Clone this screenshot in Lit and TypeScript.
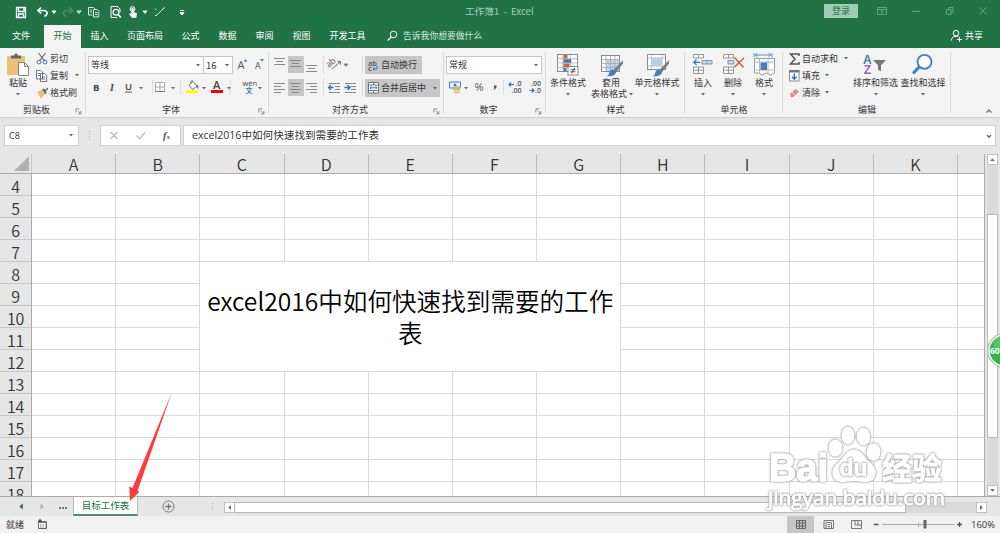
import { LitElement, html, svg, css } from "lit";
import { customElement } from "lit/decorators.js";

const caret = (x: number, y: number, c = "#666") => svg`<path d="M${x - 2} ${y - 1}h4l-2 2.4z" fill=${c} />`;
const launcher = html`<svg class="launch" width="7" height="7" viewBox="0 0 7 7" fill="none" stroke="#777" stroke-width=".8"><path d="M.9 4.5V.9H4.5M2.8 2.8L5.6 5.6M5.9 3V5.9H3" /></svg>`;
const down = html`<svg class="dn" width="8" height="5" viewBox="0 0 8 5">${caret(4, 2)}</svg>`;

const brush = svg`<path d="M24 7.2L14.5 17l2.2 2.4L24 10.500z" fill="#7b7b7b"/><path d="M14 16.500l3 2.800c-.6 3.200-4.800 4.500-9.500 3.600 2-.6 2.400-1.600 2.700-3 .5-2.500 2.100-3.700 3.800-3.400z" fill="#3f7fc1"/>`;

const icons = {
  paste: svg`<rect x="1" y="3" width="18" height="19" rx="1" fill="#ecc272"/><path d="M5 5.500V2.500h3Q8.300 .5 10 .5t2 2h3v3z" fill="#666"/><path d="M12.500 9.500h6l4 4v9h-10z" fill="#fff" stroke="#858585"/><path d="M18.500 9.500v4h4" fill="none" stroke="#858585"/>`,
  cond: svg`<rect x="1.500" y="1.500" width="20" height="17" fill="#fff" stroke="#8a8a8a"/><path d="M7 1.500v17M14.500 1.500v17M1.500 5.700h20M1.500 10h20M1.500 14.300h20" stroke="#a8a8a8" fill="none" stroke-width=".8"/><path d="M7.500 2h4v3.600h-4zM7.500 10.500h6v3.500h-6z" fill="#d9603b"/><path d="M7.500 6.200h7.800v3.600H7.500zM7.500 14.700h3v3.500h-3z" fill="#4178b5"/><rect x="12" y="13.500" width="10" height="8.500" fill="#fff" stroke="#8a8a8a"/><path d="M14.500 16.700h5M14.500 18.800h5M18.800 15l-3.400 5.500" stroke="#444" stroke-width=".9" fill="none"/>`,
  table: svg`<rect x="2.500" y="2.500" width="18" height="16" fill="#fff" stroke="#8a8a8a"/><path d="M7 6.500h13v11.500H7z" fill="#bfd4ea"/><path d="M7 2.500v16M11.500 2.500v16M16 2.500v16M2.500 6.500h18M2.500 10.500h18M2.500 14.500h18" stroke="#a0a7ae" stroke-width=".8" fill="none"/>${brush}`,
  cell: svg`<rect x="2.500" y="1.500" width="18" height="15" fill="#fff" stroke="#8a8a8a"/><path d="M6.500 1.500v15M17 1.500v15M2.500 5h18M2.500 13h18" stroke="#b0b0b0" stroke-width=".8" fill="none"/><rect x="6.500" y="5" width="10.500" height="8" fill="#b6cfe9"/>${brush}`,
  insert: svg`<g fill="#fff" stroke="#8a8a8a" stroke-width=".9"><path d="M2.500 1.500h10v3.500h-10zM2.500 14h10v6.500h-10zM2.500 17.200h10M7.500 1.500v3.500M7.500 14v6.500"/></g><path d="M11 7.500h10v3.500H11zM16 7.500v3.500" fill="#c5daf0" stroke="#7a8fa5" stroke-width=".9"/><path d="M3 9.300h6M5.500 6.700L2.800 9.300l2.700 2.600" stroke="#2e75b6" stroke-width="1.300" fill="none"/>`,
  del: svg`<g fill="#fff" stroke="#8a8a8a" stroke-width=".9"><path d="M2.500 1.500h10v3.500h-10zM2.500 14h10v6.500h-10zM2.500 17.200h10M7.500 1.500v3.500M7.500 14v6.500"/></g><path d="M7 7.500h6v3.500H7z" fill="#c5daf0" stroke="#7a8fa5" stroke-width=".9"/><path d="M13.500 4.500l9 10M23 5l-9.500 9" stroke="#d9603b" stroke-width="1.700" fill="none"/>`,
  format: svg`<path d="M2 0v4M20 0v4M3 2h16M5.500.2L3.300 2l2.200 1.800M16.500.2L18.700 2l-2.200 1.800" stroke="#4a86c0" stroke-width=".9" fill="none"/><path d="M2.500 5.500h20v14.500l-4 2-4-2-4 2-4-2h-4z" fill="#fff" stroke="#9a9a9a"/><path d="M7.500 5.500v15M16 5.500v15M2.500 9h20M2.500 17h20" stroke="#a8a8a8" fill="none" stroke-width=".8"/><rect x="8.500" y="9.500" width="6.500" height="7.500" fill="#3f7fc1"/>`,
  sort: svg`<g font-family="Liberation Sans" font-weight="700" font-size="12"><text x="-1" y="10.500" fill="#3f7fc1">A</text><text x="-.3" y="20.800" fill="#a060c0">Z</text></g><path d="M9 7h13l-5 5.300v6l-3-1.500v-4.500z" fill="#777"/>`,
  find: svg`<circle cx="13.500" cy="8.800" r="7" fill="#fdfdfd" stroke="#3f7fc1" stroke-width="1.800"/><path d="M8.300 13.800L2 20.500" stroke="#3f7fc1" stroke-width="3"/>`,
};

const big = (cls: string, icon: unknown, label: unknown, two = false) => html`<div class="big ${cls}">
  <svg width="24" height="24" viewBox="0 0 24 24">${icon}</svg>
  <div class="bl">${label}</div>${two ? html`<div class="bl l2">表格格式${down}</div>` : down}
</div>`;

@customElement("app-root")
export class AppRoot extends LitElement {
  static styles = css`
    :host { display: block; width: 1000px; height: 533px; position: relative; overflow: hidden; background: #e6e6e6;
      font: 9px/12px "Noto Sans CJK SC", sans-serif; color: #333; }
    * { box-sizing: border-box; }
    svg { display: block; flex: none; overflow: visible; }
    div { white-space: nowrap; }
    .title { height: 25px; display: flex; background: #217346; color: #a6c9b5; }
    .name { width: 360px; padding: 5px 0 0 265px; font-size: 9.600px; }
    .gap { flex: 1; }
    .login { width: 34px; height: 14px; margin-top: 4px; background: #9fcdb3; color: #217346; text-align: center; line-height: 14px; }
    .tabs { height: 23px; display: flex; background: #217346; color: #fff; line-height: 22px; text-align: center; }
    .tab { width: 37px; }
    .t0 { width: 44px; padding-right: 2px; } .t1 { width: 37px; background: #f3f3f3; color: #217346; }
    .t4 { width: 54px; } .t9 { width: 55px; }
    .tell { width: 110px; display: flex; padding-left: 12px; gap: 5px; font-size: 8.800px; color: #d8e8df; }
    .share { width: 50px; display: flex; gap: 3px; }
    .ribbon { height: 70px; display: flex; background: #f3f3f3; border-bottom: 1px solid #d0d0d0; }
    .grp { height: 69px; position: relative; display: flex; flex-direction: column; }
    .grp::after { content: ""; position: absolute; right: 0; top: 4px; bottom: 4px; width: 1px; background: #d8d8d8; }
    .body { height: 55px; display: flex; }
    .glabel { text-align: center; line-height: 13px; padding-right: 13px; }
    .launch { position: absolute; right: 4px; bottom: 2px; }
    .gclip { width: 86px; } .gfont { width: 183px; } .galign { width: 175px; } .gnum { width: 102px; }
    .gstyle { width: 139px; } .gcell { width: 98px; } .gedit { width: 168px; }
    .gstyle .glabel, .gcell .glabel, .gedit .glabel { padding: 0; }
    .big { display: flex; flex-direction: column; align-items: center; padding-top: 5px; }
    .bl { line-height: 12px; display: flex; align-items: center; }
    .dn { margin-top: 3px; }
    .l2 { margin-top: -1px; } .l2 .dn { margin: 0 -4px 0 0; }
    .bpaste { width: 36px; }
    .b44 { width: 44px; } .b42 { width: 42px; } .b50 { width: 50px; }
    .b36 { width: 36px; } .b24 { width: 24px; } .b38 { width: 38px; } .b47 { width: 45px; } .b48 { width: 50px; }
    .rows { padding-top: 2px; }
    .row { height: 17px; display: flex; align-items: center; gap: 2px; line-height: 17px; }
    .rows.e { width: 70px; padding-left: 6px; }
    .row .dn { margin: 0 0 0 1px; }
    .col { display: flex; flex-direction: column; }
    .line { display: flex; height: 29px; padding: 8px 0 0 2px; }
    .combo { height: 18px; background: #fff; border: 1px solid #c6c6c6; display: flex; justify-content: space-between; align-items: center; padding: 0 1px 0 2px; }
    .combo .dn { margin: 0; }
    .cf { width: 116px; } .cs { width: 30px; margin-left: -1px; font-size: 9.500px; } .cn { width: 96px; }
    .tog { height: 18px; background: #c6c6c6; display: flex; align-items: center; gap: 3px; padding-left: 3px; margin-bottom: 5px; }
    .tog .dn { margin: 0 0 0 3px; }
    .w1 { width: 57px; } .w2 { width: 75px; gap: 2px; }
    .btns { padding-top: 8px; }
    .fbar { height: 36px; display: flex; padding: 7px 4px 0; }
    .box { height: 21px; background: #fff; border: 1px solid #cfcfcf; line-height: 19px; display: flex; align-items: center; justify-content: space-between; }
    .nb { width: 75px; padding: 0 3px 0 4px; font-family: "Open Sans"; font-size: 9px; }
    .nb .dn, .fx .dn { margin: 0; }
    .bx { width: 81px; margin-right: 2px; }
    .fx { width: 813px; padding: 0 2px 0 8px; font-family: "Open Sans", "Noto Sans CJK SC", sans-serif; font-size: 10.600px; }
    .fx .ft { margin-top: -1px; }
    .main { height: 342px; display: flex; }
    .sheet { width: 985px; height: 342px; overflow: hidden; border-right: 1px solid #ababab; display: flex; flex-direction: column; }
    .heads { height: 20px; flex: none; display: flex; font-size: 16px; font-weight: 350; line-height: 21px; text-align: center; border-bottom: 1px solid #ababab; }
    .corner { width: 32px; flex: none; border-right: 1px solid #c6c6c6; }
    .h { width: 84.180px; flex: none; border-right: 1px solid #bdbdbd; }
    .lower { display: flex; }
    .nums { width: 32px; flex: none; border-right: 1px solid #ababab; font-size: 16px; font-weight: 350; line-height: 24px; text-align: center; }
    .n { height: 22px; border-bottom: 1px solid #c6c6c6; letter-spacing: -.4px; }
    .cells { flex: none; display: grid; grid-template-columns: repeat(12, 84.180px); grid-auto-rows: 22px; background: #fff; }
    .c { border-right: 1px solid #d9d9d9; border-bottom: 1px solid #d9d9d9; }
    .merged { grid-column: 3 / 8; grid-row: 5 / 10; display: flex; align-items: center; justify-content: center; text-align: center;
      white-space: pre; font-size: 24.600px; line-height: 32px; font-weight: 350; color: #000; padding-bottom: 1px; }
    .vs { width: 15px; display: flex; flex-direction: column; padding: 0 2px; }
    .sb { width: 11px; height: 11px; background: #fff; border: 1px solid #c0c0c0; flex: none; }
    .tr { background: #dadada; } .v1 { height: 49px; } .v2 { height: 48px; flex: 1; }
    .th { background: #fff; border: 1px solid #b8b8b8; } .vt { height: 224px; }
    .bottom { height: 20px; display: flex; border-top: 1px solid #ababab; }
    .stab { width: 65px; height: 19px; background: #fff; border-bottom: 2px solid #4a9069; border-right: 1px solid #bbb; border-left: 1px solid #bbb;
      color: #217346; font-size: 9.500px; line-height: 17px; text-align: center; }
    .hs { display: flex; padding-top: 5px; }
    .ht { width: 672px; height: 11px; margin-left: -1px; } .h2 { width: 70px; height: 11px; }
    .status { height: 17px; display: flex; background: #f1f1f1; padding-left: 6px; line-height: 17px; }
    .pct { font: 9.500px/17px "Open Sans"; width: 29px; }
    .ov { position: absolute; left: 0; top: 0; pointer-events: none; }
    .mark { filter: drop-shadow(0 0 .8px #999) drop-shadow(0 0 .5px #bbb); }
  `;

  render() {
    const cells: unknown[] = [];
    for (let r = 0; r < 15; r++)
      for (let c = 0; c < 12; c++) {
        if (r === 4 && c === 2) cells.push(html`<div class="c merged">excel2016中如何快速找到需要的工作
表</div>`);
        else if (!(r >= 4 && r <= 8 && c >= 2 && c <= 6)) cells.push(html`<div class="c"></div>`);
      }
    return html`
      <div class="title">
        <svg width="200" height="25" fill="none" stroke="#fff" stroke-width="1">
          <path d="M16.500 7.500h9v10h-9z M18.500 7.500v4h5.500v-4 M18.500 17.500v-3.500h5v3.500" stroke-width="1.300"/>
          <path d="M41 7.500L38 10.500l3.200 3M38.500 10.500h5.500q3.500.5 3 3-.4 2-2.500 2.800" stroke-width="1.700"/>${caret(54, 12, "#fff")}
          <g stroke="#4d9069"><path d="M69.500 7.500l3 3-3 3M72 10.500h-5.500q-3.500.5-3 3 .4 2 2.500 2.800" stroke-width="1.500"/></g>${caret(79, 12, "#4d9069")}
          <path d="M92.500 15h-4V7.500h5l1.500 1.500M93.500 9.500h3.500l1.800 1.800V17h-5.300zM90 10h2M90 12h2M95 12.500h2.500M95 14.500h2.500" stroke="#dceae2"/>
          <path d="M117 17.500h-6v-11h6.500l2.500 2.500v3"/><circle cx="116" cy="12.300" r="2.900" stroke-width="1.300"/><path d="M118.200 14.500l2.600 3" stroke-width="1.800"/>
          <circle cx="132.500" cy="9" r="2.400"/><path d="M131.700 8.500q.9-.8 1.700 0v4l3.200.8-.5 4.200h-4.200l-2.500-3.500q.7-1 2.300.2z" fill="#fff" stroke-width=".6"/>${caret(145, 12, "#fff")}
          <path d="M156 16l7.500-7.500M155 8.500l1.500 1.500M162.500 9l2.500-1.500M155 15.500h2" stroke="#dceae2"/>
          <path d="M180 10.500h4"/>${caret(182, 13.500, "#fff")}
        </svg>
        <div class="name">工作簿1&nbsp; - &nbsp;Excel</div><div class="gap"></div><div class="login">登录</div>
        <svg width="142" height="25" fill="none" stroke="#669f7e">
          <path d="M19.500 7.500h9v7h-9zM19.500 9.500h9M24 14v-3.500M22.500 12l1.500-1.500 1.500 1.500M54 11.500h7.500M88.500 9.500h4.500v5h-4.500zM90.500 9.500v-2h4.500v5h-2M121.500 7.500l7 7M128.500 7.500l-7 7"/>
        </svg>
      </div>
      <div class="tabs">
        <div class="tab t0">文件</div><div class="tab t1">开始</div><div class="tab">插入</div><div class="tab t4">页面布局</div>
        <div class="tab">公式</div><div class="tab">数据</div><div class="tab">审阅</div><div class="tab">视图</div><div class="tab t9">开发工具</div>
        <div class="tell"><svg width="11" height="22" fill="none" stroke="#fff"><circle cx="6.500" cy="9.500" r="3.300"/><path d="M4.200 12L.8 15.500" stroke-width="1.300"/></svg>告诉我你想要做什么</div>
        <div class="gap"></div>
        <div class="share"><svg width="12" height="22" fill="none" stroke="#fff"><circle cx="6" cy="8.200" r="2.800"/><path d="M1.500 15.500q0-4 4.500-4.300 1.500 0 2.500.8M9.500 12v5M7 14.500h5"/></svg>共享</div>
      </div>
      <div class="ribbon">
        <div class="grp gclip"><div class="body">
          ${big("bpaste", icons.paste, "粘贴")}
          <div class="rows">
            <div class="row"><svg width="12" height="12" fill="none"><path d="M2.500 0l6 8M9.500 0l-6 8" stroke="#666" stroke-width="1.200"/><circle cx="3" cy="9" r="2" stroke="#3f7fc1"/><circle cx="9" cy="9" r="2" stroke="#3f7fc1"/></svg>剪切</div>
            <div class="row"><svg width="12" height="12" fill="#fff" stroke="#777"><path d="M.5.5h4L6.500 2v7H.5zM4.500 3.500h4.200l2 2v6H4.500z"/><path d="M2 3.500h2M2 5.500h2M6 7h3M6 9h3" stroke="#3f7fc1"/></svg>复制<svg class="dn" width="12" height="5">${caret(6, 2)}</svg></div>
            <div class="row"><svg width="12" height="12"><path d="M1 5l5-2 3 4-4 4.500z" fill="#ecbb76"/><path d="M6 2.500l2-1 1.200 1.200L11.500.5l.8 1.200-2.300 2.500.5 2-1.200 1z" fill="#666"/></svg>格式刷</div>
          </div></div><div class="glabel">剪贴板</div>${launcher}</div>
        <div class="grp gfont"><div class="body col">
          <div class="line"><div class="combo cf">等线${down}</div><div class="combo cs">16${down}</div>
            <svg width="34" height="18" font-family="Open Sans" fill="#555"><text x="4.500" y="12.800" font-size="11">A</text><text x="22" y="12.800" font-size="9">A</text><path d="M10.500 5.500l2-2.500 2 2.500zM27 3h4l-2 2.500z" fill="#3f7fc1"/></svg></div>
          <svg width="182" height="26" font-family="Open Sans" fill="#444" font-size="9.500">
            <text x="7" y="13.500" font-weight="700">B</text><text x="24" y="13.500" font-family="Liberation Serif" font-style="italic" font-weight="700" font-size="10">I</text><text x="39" y="13" font-weight="600">U</text><path d="M39 15h7" stroke="#555"/>${caret(55, 11)}
            <path d="M66.500 3v15M144 3v15" stroke="#dcdcdc"/><path d="M69.500 5.500h9v9h-9zM74 5.500v9M69.500 10h9" fill="#fff" stroke="#aaa"/><path d="M69 14.500h10" stroke="#777"/>${caret(87, 11)}
            <path d="M94.500 3v15" stroke="#dcdcdc"/><path d="M103 8l4-3.500 4 4.500-4.500 3.500z" fill="#fff" stroke="#777"/><path d="M105 7V4h2" stroke="#777" fill="none"/><path d="M111 7.500q2.500 2 .8 4.500l-1.500-2z" fill="#3f7fc1"/><path d="M100 13h12v3h-12z" fill="#ff0"/>${caret(118, 11)}
            <text x="127" y="12.300" font-size="11" font-weight="600">A</text><path d="M125 13h12v3h-12z" fill="red"/>${caret(143, 11)}
            <text x="156.500" y="9" font-size="7.500">wén</text><text x="159.500" y="16" font-size="7" fill="#2e75b6" font-family="Noto Sans CJK SC" font-weight="700">文</text>${caret(174, 11)}
          </svg></div><div class="glabel">字体</div>${launcher}</div>
        <div class="grp galign"><div class="body">
          <svg width="96" height="55" fill="none" stroke="#888">
            <path d="M19 8h16v17H19zM19 31h16v17H19z" fill="#c6c6c6" stroke="none"/>
            <path d="M5 11h11M7 14h7M5 17h11M21 13h11M23 16h7M21 19h11M37 18h11M39 21h7M37 24h11M5 36h11M5 39h7M5 42h11M5 45h7M21 36h11M23 39h7M21 42h11M23 45h7M37 36h11M41 39h7M37 42h11M41 45h7" transform="translate(0 -.5)"/>
            <path d="M54.500 8v17M54.500 31v17M93.500 8v17M93.500 31v17" stroke="#dcdcdc"/>
            <text x="59" y="18" font-size="8.500" font-family="Open Sans" fill="#555" stroke="none" transform="rotate(-38 62 18)">ab</text><path d="M63 21l8-7M68.500 13.500l3 .2-.2 3" stroke="#666"/>${caret(77, 17)}
            <path d="M60 35.500h11M66 38.500h5M66 41.500h5M60 44.500h11M76 35.500h11M82 38.500h5M82 41.500h5M76 44.500h11"/><path d="M59.500 39.500h5M62 37l-2.500 2.500 2.500 2.500M75.500 39.500h5M78.500 37l2.500 2.500-2.500 2.500" stroke="#2e75b6" stroke-width="1.300"/>
          </svg>
          <div class="btns"><div class="tog w1"><svg width="10" height="13" font-family="Open Sans" font-size="7.500" fill="#555"><text x="0" y="6.500" font-weight="600">ab</text><text x="0" y="12" font-weight="600">c</text><path d="M9 7v3H5M6.500 8.500L5 10l1.500 1.500" fill="none" stroke="#2e75b6"/></svg>自动换行</div>
            <div class="tog w2"><svg width="11" height="12" fill="#fff" stroke="#777"><path d="M.5.5h10v10.500H.5zM.5 3h10M.5 8.500h10M5.500.5V3M5.500 8.500V11"/><path d="M2 5.800h7M3.500 4.500L2 5.800l1.500 1.300M7.500 4.500L9 5.800 7.500 7.100" stroke="#2e75b6" fill="none"/></svg>合并后居中${down}</div></div>
          </div><div class="glabel">对齐方式</div>${launcher}</div>
        <div class="grp gnum"><div class="body col"><div class="line"><div class="combo cn">常规${down}</div></div>
          <svg width="101" height="26" font-family="Open Sans" fill="#555" font-size="11"><path d="M5.500 5h11v6h-11z" fill="#e8f1fa" stroke="#3f7fc1"/><circle cx="11" cy="8" r="1.500" fill="#3f7fc1"/><path d="M10 9h7v1.500h-7zM9 12h7v1.500H9zM10 14.500h6V16h-6z" fill="#ecb660"/>${caret(22, 11)}
            <text x="30.500" y="14">%</text><path d="M50 8.500h2.700q.2 3-2.500 4.500l-.6-.6q1.200-.8 1-1.700h-.6z"/><path d="M59.500 3v15" stroke="#dcdcdc"/>
            <g font-size="7" font-weight="600"><text x="71.500" y="9">.0</text><text x="67.500" y="15.500">.00</text><text x="87" y="9">.00</text><text x="91" y="15.500">.0</text></g><path d="M65 7.500h5M67 5.500l-2 2 2 2M85.500 13.500h4.500M88 11.500l2 2-2 2" fill="none" stroke="#2e75b6" stroke-width="1.200"/></svg>
          </div><div class="glabel">数字</div>${launcher}</div>
        <div class="grp gstyle"><div class="body">${big("b44", icons.cond, "条件格式")}${big("b42", icons.table, "套用", true)}${big("b50", icons.cell, "单元格样式")}</div><div class="glabel">样式</div></div>
        <div class="grp gcell"><div class="body">${big("b36", icons.insert, "插入")}${big("b24", icons.del, "删除")}${big("b38", icons.format, "格式")}</div><div class="glabel">单元格</div></div>
        <div class="grp gedit"><div class="body">
          <div class="rows e">
            <div class="row"><svg width="11" height="12" fill="none" stroke="#555" stroke-width="1.500"><path d="M10 3V1H1.500l4.500 5-4.500 5H10V9"/></svg>自动求和<svg class="dn" width="10" height="5">${caret(5, 2)}</svg></div>
            <div class="row"><svg width="11" height="12"><path d="M.5.5h9.500v10.500H.5z" fill="#fff" stroke="#888"/><path d="M0 0h10.500v2.500H0z" fill="#777"/><path d="M5.300 3.500v5.500M3 6.800l2.300 2.400 2.300-2.400" fill="none" stroke="#2e75b6" stroke-width="1.400"/></svg>填充${down}</div>
            <div class="row"><svg width="11" height="12"><path d="M1 7l5.500-5 3.500 2.500-5.500 5.500H2z" fill="#e8828f"/><path d="M3.200 5l3 3.500" stroke="#fff" stroke-width=".8"/></svg>清除${down}</div>
          </div>${big("b47", icons.sort, "排序和筛选")}${big("b48", icons.find, "查找和选择")}</div><div class="glabel">编辑</div></div>
        <svg width="49" height="69"><path d="M35.500 64.500l2.500-2.500 2.500 2.500" fill="none" stroke="#666" stroke-width="1.200"/></svg>
      </div>
      <div class="fbar">
        <div class="box nb">C8${down}</div>
        <svg width="21" height="21" fill="#aaa"><path d="M10 6h1v1h-1zM10 8.500h1v1h-1zM10 11h1v1h-1zM10 13.500h1v1h-1z"/></svg>
        <div class="box bx"><svg width="79" height="19" fill="none" stroke="#bbb" stroke-width="1.300"><path d="M9.500 6l7 7M16.500 6l-7 7M35.500 9.500l3 3.200 5.500-6.200"/><text x="62" y="13" font-family="Liberation Serif" font-style="italic" font-weight="700" font-size="10.500" fill="#555" stroke="none">f<tspan font-size="7">x</tspan></text></svg></div>
        <div class="box fx"><div class="ft">excel2016中如何快速找到需要的工作表</div><svg width="8" height="8" fill="none" stroke="#666" stroke-width="1.300"><path d="M2 3l2 2.200L6 3"/></svg></div>
      </div>
      <div class="main"><div class="sheet">
        <div class="heads"><div class="corner"><svg width="31" height="19"><path d="M29 2v15H14z" fill="#b2b2b2"/></svg></div>${[..."ABCDEFGHIJK"].map(l => html`<div class="h">${l}</div>`)}</div>
        <div class="lower"><div class="nums">${Array.from({ length: 15 }, (_, i) => html`<div class="n">${i + 4}</div>`)}</div><div class="cells">${cells}</div></div>
      </div>
      <div class="vs"><div class="sb"><svg width="9" height="9"><path d="M2 6h5L4.500 3.300z" fill="#777"/></svg></div><div class="tr v1"></div><div class="th vt"></div><div class="tr v2"></div><div class="sb"><svg width="9" height="9"><path d="M2 3h5L4.500 5.700z" fill="#777"/></svg></div></div></div>
      <div class="bottom">
        <svg width="73" height="19"><path d="M22.800 6.500v6l-3.500-3z" fill="#217346"/><path d="M40.500 6.500v6l3.500-3z" fill="#b5b5b5"/><path d="M59 10h2v2h-2zM62 10h2v2h-2zM65 10h2v2h-2z" fill="#4a9069"/></svg>
        <div class="stab">目标工作表</div>
        <svg width="86" height="19" fill="none" stroke="#777"><circle cx="30.500" cy="9.500" r="5.500"/><path d="M30.500 6.500v6M27.500 9.500h6" stroke-width="1.300"/><path d="M74.500 6v8" stroke-dasharray="1 1.500" stroke="#aaa"/></svg>
        <div class="hs"><div class="sb"><svg width="9" height="9"><path d="M6 2v5L3.300 4.500z" fill="#666"/></svg></div><div class="th ht"></div><div class="tr h2"></div><div class="sb"><svg width="9" height="9"><path d="M3 2v5l2.700-2.500z" fill="#666"/></svg></div></div>
      </div>
      <div class="status">就绪<svg width="60" height="17"><path d="M14.500 5.500h8v7h-8z" fill="#fff" stroke="#666"/><path d="M14 5h9v2h-9z" fill="#777"/><circle cx="16" cy="5" r="1.800" fill="#555"/><path d="M16 9h6M16 11h6" stroke="#777" stroke-dasharray="1.500 1"/></svg>
        <div class="gap"></div>
        <svg width="184" height="17" fill="none" stroke="#777"><path d="M0 0h27v17H0z" fill="#c6c6c6" stroke="none"/><path d="M9.500 4.500h9v8h-9zM12.500 4.500v8M15.500 4.500v8M9.500 7h9M9.500 10h9" stroke="#666"/><path d="M37 4.500h9.500v8H37zM39 6.500h5.500v6H39zM40.500 8.500H43M40.500 10.500H43M64.500 4.500h10v8h-10zM68 4.500V9h3V4.500M71 9h3"/><path d="M87 8.500h4.500M170 8.500h5M172.500 6v5" stroke="#555" stroke-width="1.300"/><path d="M95 8.500h73M131.500 7v4" stroke="#aaa"/><path d="M136.500 4h3v8.500h-3z" fill="#666" stroke="none"/></svg>
        <div class="pct">160%</div>
      </div>
      <svg class="ov" width="1000" height="533">
        <path d="M172 392L137.500 491l2 .8L130 501l-.800-14.500 3.300 1.500z" fill="#ff3b3b"/>
        <g class="mark" fill="#fff" font-weight="700" font-family="Liberation Sans">
          <ellipse cx="835.500" cy="448" rx="7" ry="8.800"/><ellipse cx="848" cy="435.500" rx="6.500" ry="9"/><ellipse cx="863.500" cy="436.500" rx="6.800" ry="9"/><ellipse cx="873.500" cy="452" rx="7" ry="8.800"/>
          <path d="M854 449.500c8 0 9.500 7 14.500 11.500 6 5 9 9.500 6.500 15.500-4 8.500-12.500 4.500-21 4.500s-16 4-20.500-3.500c-3-6 0-11 5.500-16 6-5 7-12 15-12z"/>
          <text x="769" y="481" font-size="39" stroke="#fff" stroke-width="1.500" textLength="59" lengthAdjust="spacingAndGlyphs">Bai</text>
          <text x="882" y="479" font-size="30" stroke="#fff" stroke-width=".8" font-family="Noto Sans CJK SC">经验</text>
          <text x="768" y="505" font-size="20" font-weight="400" stroke="#fff" stroke-width=".8" font-family="Open Sans" textLength="177" lengthAdjust="spacingAndGlyphs">jingyan.baidu.com</text>
        </g>
        <g class="mark"><text x="839.500" y="476" font-size="23" font-weight="700" font-family="Liberation Sans" fill="#fff" stroke="#fff" stroke-width=".6">du</text></g>
        <circle cx="1004.500" cy="350.500" r="17.500" fill="#b9b9b9"/><circle cx="1004.500" cy="350.500" r="16.300" fill="#f5f5f5"/><circle cx="1004.500" cy="350.500" r="14.800" fill="#35b24a"/><ellipse cx="1004" cy="344" rx="11" ry="8" fill="#6fd07b" opacity=".6"/>
        <text x="990" y="353.500" fill="#fff" font-family="Open Sans" font-weight="700" font-size="8.500">60</text>
      </svg>`;
  }
}
